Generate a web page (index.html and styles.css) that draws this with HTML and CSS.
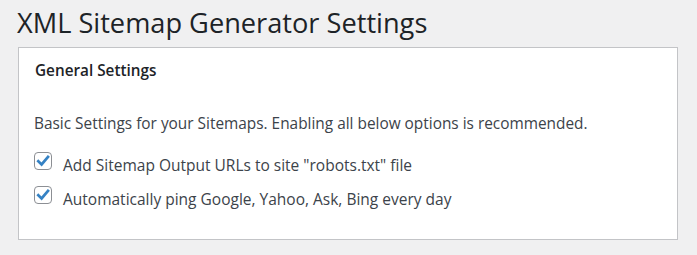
FILE: index.html
```html
<!DOCTYPE html>
<html lang="en">
<head>
<meta charset="utf-8">
<title>XML Sitemap Generator Settings</title>
<link rel="stylesheet" href="styles.css">
</head>
<body>
<div class="wrap">
  <h1 class="page-title">XML Sitemap Generator Settings</h1>
  <div class="card">
    <h2 class="card-title">General Settings</h2>
    <p class="card-desc">Basic Settings for your Sitemaps. Enabling all below options is recommended.</p>
    <label class="option">
      <span class="cb"><svg viewBox="0 0 18 18" width="18" height="18"><path d="M4.3 9.2 L7.6 12.4 L14 4.8" fill="none" stroke="#3582c4" stroke-width="2.7" stroke-linecap="square" stroke-linejoin="miter"/></svg></span>
      <span class="option-text">Add Sitemap Output URLs to site "robots.txt" file</span>
    </label>
    <label class="option">
      <span class="cb"><svg viewBox="0 0 18 18" width="18" height="18"><path d="M4.3 9.2 L7.6 12.4 L14 4.8" fill="none" stroke="#3582c4" stroke-width="2.7" stroke-linecap="square" stroke-linejoin="miter"/></svg></span>
      <span class="option-text">Automatically ping Google, Yahoo, Ask, Bing every day</span>
    </label>
  </div>
</div>
</body>
</html>
```
FILE: styles.css
```css
html, body {
  margin: 0;
  padding: 0;
  background: #f0f0f1;
}
body {
  font-family: "Open Sans", "Noto Sans", sans-serif;
  color: #3c434a;
}
.wrap {
  padding: 8px 19px 0 18px;
}
.page-title {
  margin: 0 0 9px -1px;
  font-size: 27.2px;
  line-height: 30px;
  font-weight: 400;
  color: #1d2327;
}
.card {
  background: #fff;
  border: 1px solid #c3c4c7;
  padding: 12px 16px 27px 15px;
}
.card-title {
  margin: 0 0 34px 1px;
  font-size: 15.3px;
  line-height: 20px;
  font-weight: 600;
  color: #1d2327;
}
.card-desc {
  margin: 0 0 10px 0;
  font-size: 15.4px;
  line-height: 20px;
}
.option {
  display: flex;
  align-items: flex-start;
  height: 34px;
  font-size: 15.5px;
}
.cb {
  width: 16px;
  height: 16px;
  margin-top: 8px;
  border: 1px solid #8c8f94;
  border-radius: 4px;
  background: #fff;
  display: flex;
  align-items: center;
  justify-content: center;
  flex: none;
}
.cb svg {
  display: block;
  flex: none;
}
.option-text {
  margin: 11px 0 0 11px;
  line-height: 20px;
}
```
